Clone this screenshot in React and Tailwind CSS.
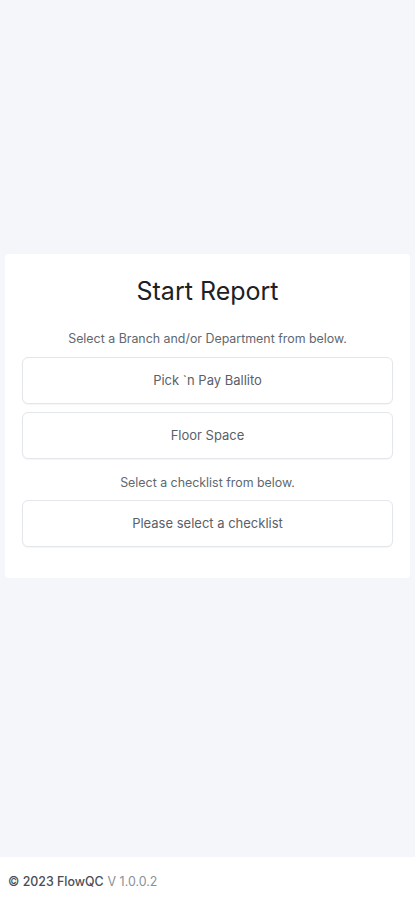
import React from 'react';

const SelectBox = ({ label }) => (
  <button className="w-full h-[47px] rounded-md border border-[#e3e6ea] bg-white text-[13px] text-[#5a6068] shadow-[0_1px_1px_rgba(0,0,0,0.04)]">
    {label}
  </button>
);

const App = () => {
  return (
    <div className="min-h-[900px] flex flex-col bg-[#f5f6f9] font-['Inter',sans-serif]">
      <main className="h-[857px] px-[5px] pt-[254px]">
        <div className="bg-white rounded-sm px-[17px] pt-[21px] pb-[31px]">
          <h1 className="text-center text-[25px] leading-[32px] text-[#1d2125] font-normal">Start Report</h1>
          <p className="mt-[24px] text-center text-[12.4px] leading-4 text-[#61676f]">
            Select a Branch and/or Department from below.
          </p>
          <div className="mt-[10px] flex flex-col gap-[8px]">
            <SelectBox label="Pick `n Pay Ballito" />
            <SelectBox label="Floor Space" />
          </div>
          <p className="mt-[16px] text-center text-[12.4px] leading-4 text-[#61676f]">
            Select a checklist from below.
          </p>
          <div className="mt-[9px]">
            <SelectBox label="Please select a checklist" />
          </div>
        </div>
      </main>
      <footer className="h-[43px] bg-white flex items-start pt-[17px] px-[8px] text-[12.4px] leading-4">
        <span className="font-medium text-[#494e55]">© 2023 FlowQC</span>
        <span className="ml-1 text-[#8a9099]">V 1.0.0.2</span>
      </footer>
    </div>
  );
};

export default App;
